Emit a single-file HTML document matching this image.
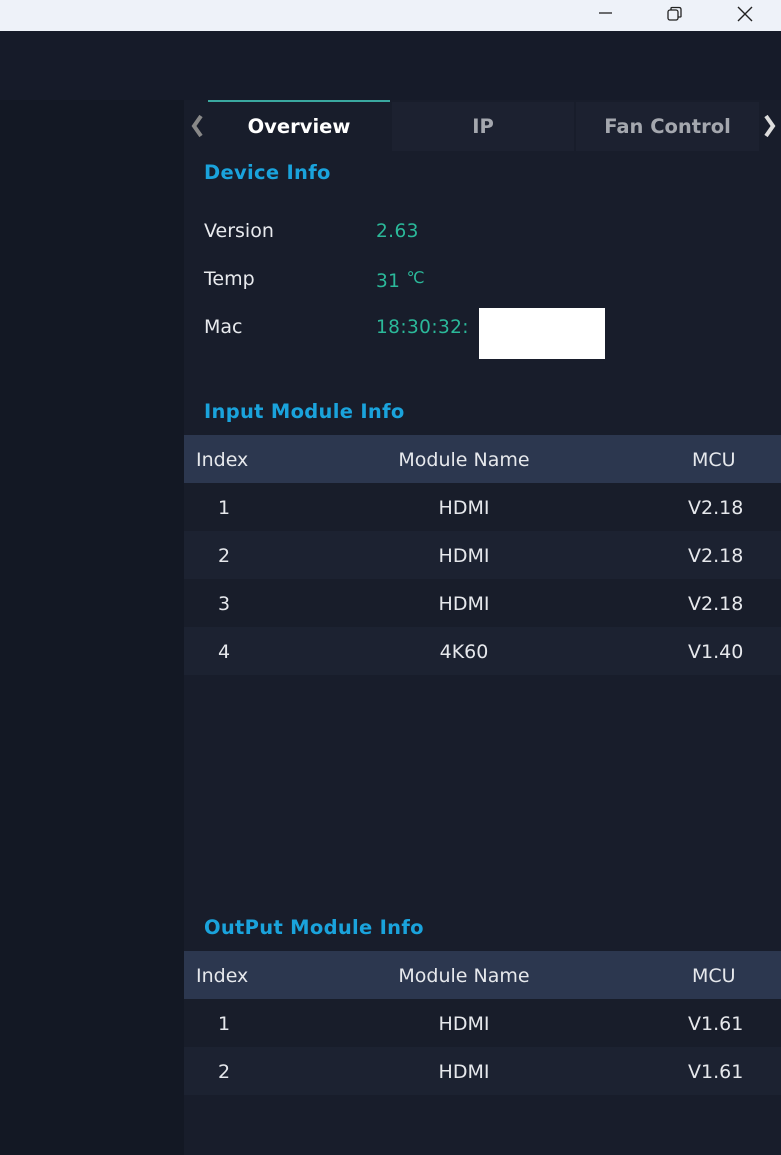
<!DOCTYPE html>
<html><head><meta charset="utf-8"><style>
*{margin:0;padding:0;box-sizing:border-box}
body{width:781px;height:1155px;overflow:hidden;background:#181d2b;font-family:"DejaVu Sans","Liberation Sans",sans-serif;position:relative;color:#e6e8ec}
.abs{position:absolute}
.title{left:0;top:0;width:781px;height:31px;background:#eef2f9}
.hdr{left:0;top:31px;width:781px;height:69px;background:#161b29}
.side{left:0;top:100px;width:184px;height:1055px;background:#131824}
.tab{top:102px;height:49px;font-weight:bold;font-size:19.5px;line-height:49px;text-align:center}
.h{left:204px;color:#1aa3dc;font-weight:bold;font-size:19.5px;letter-spacing:0.3px}
.lbl{left:204px;font-size:19px;color:#e8eaee}
.val{left:376px;font-size:18.5px;color:#2bb99a;letter-spacing:0.4px}
.row{left:184px;width:597px;height:48px;font-size:19px;line-height:50px}
.row span{position:absolute}
.c1{left:12px}.c1n{left:34px}.c2{left:210px;width:140px;text-align:center}.c3{left:504px}
</style></head><body>
<div class="abs title"></div>
<svg class="abs" style="left:590px;top:6px" width="180" height="18">
<line x1="9" y1="7" x2="22" y2="7" stroke="#222" stroke-width="1.3"/>
<rect x="78" y="4" width="10" height="10" rx="2" fill="none" stroke="#222" stroke-width="1.3"/>
<path d="M81 4 V2.5 Q81 1.5 82 1.5 H89 Q91 1.5 91 3.5 V10.5 Q91 11 89.5 11 H88" fill="none" stroke="#222" stroke-width="1.3"/>
<path d="M148 1 L162 15 M162 1 L148 15" stroke="#222" stroke-width="1.4"/>
</svg>
<div class="abs hdr"></div>
<div class="abs side"></div>
<div class="abs" style="left:208px;top:100px;width:182px;height:2px;background:#3aa8a0"></div>
<div class="abs tab" style="left:208px;width:182px;color:#fff">Overview</div>
<div class="abs tab" style="left:392px;width:182px;background:#1c2130;color:#a4a7ae">IP</div>
<div class="abs tab" style="left:576px;width:183px;background:#1c2130;color:#a4a7ae">Fan Control</div>
<svg class="abs" style="left:186px;top:114px" width="595" height="24">
<path d="M15 2 L8 12 L15 22" stroke="#888" stroke-width="4" fill="none"/>
<path d="M580 2 L587 12 L580 22" stroke="#ddd" stroke-width="4" fill="none"/>
</svg>
<div class="abs h" style="top:161px">Device Info</div>
<div class="abs lbl" style="top:220px">Version</div><div class="abs val" style="top:221px">2.63</div>
<div class="abs lbl" style="top:268px">Temp</div><div class="abs val" style="top:268px">31 <span style="font-size:16px;vertical-align:4px">℃</span></div>
<div class="abs lbl" style="top:316px">Mac</div><div class="abs val" style="top:317px">18:30:32:</div>
<div class="abs" style="left:479px;top:308px;width:126px;height:51px;background:#fff"></div>
<div class="abs h" style="top:400px">Input Module Info</div>
<div class="abs row" style="top:435px;background:#2c374f"><span class="c1">Index</span><span class="c2" style="left:185px;width:190px">Module Name</span><span class="c3" style="left:508px">MCU</span></div>
<div class="abs row" style="top:483px;background:#181d2a"><span class="c1n">1</span><span class="c2">HDMI</span><span class="c3">V2.18</span></div>
<div class="abs row" style="top:531px;background:#1c2231"><span class="c1n">2</span><span class="c2">HDMI</span><span class="c3">V2.18</span></div>
<div class="abs row" style="top:579px;background:#181d2a"><span class="c1n">3</span><span class="c2">HDMI</span><span class="c3">V2.18</span></div>
<div class="abs row" style="top:627px;background:#1c2231"><span class="c1n">4</span><span class="c2">4K60</span><span class="c3">V1.40</span></div>
<div class="abs h" style="top:916px">OutPut Module Info</div>
<div class="abs row" style="top:951px;background:#2c374f"><span class="c1">Index</span><span class="c2" style="left:185px;width:190px">Module Name</span><span class="c3" style="left:508px">MCU</span></div>
<div class="abs row" style="top:999px;background:#181d2a"><span class="c1n">1</span><span class="c2">HDMI</span><span class="c3">V1.61</span></div>
<div class="abs row" style="top:1047px;background:#1c2231"><span class="c1n">2</span><span class="c2">HDMI</span><span class="c3">V1.61</span></div>
</body></html>
